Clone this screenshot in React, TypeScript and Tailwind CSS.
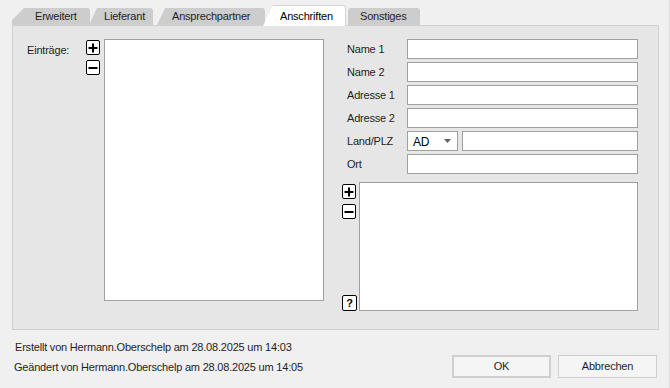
import React from 'react';

const font = { fontFamily: '"Liberation Sans", Arial, sans-serif' };

function PlusButton() {
    return (
        <button type="button" className="w-[14px] h-[15px] border border-black rounded-[2px] bg-white flex items-center justify-center p-0">
            <svg width="10" height="10" viewBox="0 0 10 10">
                <rect x="4" y="0.5" width="2" height="9" fill="#000" />
                <rect x="0.5" y="4" width="9" height="2" fill="#000" />
            </svg>
        </button>
    );
}

function MinusButton() {
    return (
        <button type="button" className="w-[14px] h-[15px] border border-black rounded-[2px] bg-white flex items-center justify-center p-0">
            <svg width="10" height="10" viewBox="0 0 10 10">
                <rect x="0.5" y="4" width="9" height="2" fill="#000" />
            </svg>
        </button>
    );
}

function HelpButton() {
    return (
        <button type="button" className="w-[15px] h-[16px] border border-black rounded-[2px] bg-white flex items-center justify-center p-0 text-[11px] font-bold leading-none text-black">
            ?
        </button>
    );
}

function Field({ label, children }: { label: string; children?: React.ReactNode }) {
    return (
        <div className="flex items-center h-[20px]">
            <span className="w-[65px] pl-[5px] shrink-0">{label}</span>
            {children ?? <input className="w-[231px] h-[20px] border border-[#a0a0a0] bg-white outline-none" />}
        </div>
    );
}

export default function App() {
    return (
        <div style={font} className="w-[670px] h-[388px] bg-[#f0f0f0] border-r border-[#d9d9d9] text-[11px] tracking-[-0.2px] text-[#1e1e1e] overflow-hidden">
            <div className="pl-[12px] pr-[10px] pt-[6px]">
                {/* Tabs */}
                <div className="flex items-end h-[19px]">
                    <div className="w-[78px] h-[17px] pl-[23px] flex items-center bg-[#cdcdcd] rounded-tr-[3px] [clip-path:polygon(12px_0,100%_0,100%_100%,0_100%,0_12px)]">
                        Erweitert
                    </div>
                    <div className="ml-[-1px] w-[64px] h-[17px] pl-[15px] flex items-center bg-[#cdcdcd] rounded-tr-[3px] [clip-path:polygon(8px_0,100%_0,100%_100%,0_100%)]">
                        Lieferant
                    </div>
                    <div className="ml-[4px] w-[108px] h-[17px] pl-[15px] flex items-center bg-[#cdcdcd] rounded-tr-[3px] [clip-path:polygon(8px_0,100%_0,100%_100%,0_100%)]">
                        Ansprechpartner
                    </div>
                    <div className="relative z-10 ml-[-2px] mb-[-1px] w-[83px] h-[21px] pl-[17px] flex items-center bg-white border-t border-r border-[#d4d4d4] rounded-tr-[3px] [clip-path:polygon(10px_0,100%_0,100%_100%,0_100%)] text-black">
                        Anschriften
                    </div>
                    <div className="ml-[2px] w-[72px] h-[17px] pl-[12px] flex items-center bg-[#cdcdcd] rounded-t-[3px]">
                        Sonstiges
                    </div>
                </div>

                {/* Panel */}
                <div className="h-[305px] border border-[#d0d0d0] bg-[#e6e6e6] flex pt-[13px]">
                    {/* Left: entries */}
                    <div className="flex pl-[14px]">
                        <span className="w-[59px] pt-[3px]">Einträge:</span>
                        <div className="flex flex-col gap-[5px] pt-[1px]">
                            <PlusButton />
                            <MinusButton />
                        </div>
                        <div className="ml-[4px] w-[220px] h-[262px] border border-[#a0a0a0] bg-white" />
                    </div>

                    {/* Right: address */}
                    <div className="ml-[18px] flex flex-col gap-[3px]">
                        <Field label="Name 1" />
                        <Field label="Name 2" />
                        <Field label="Adresse 1" />
                        <Field label="Adresse 2" />
                        <Field label="Land/PLZ">
                            <div className="flex gap-[4px]">
                                <div className="w-[51px] h-[20px] border border-[#a0a0a0] bg-white flex items-center justify-between pl-[5px] pr-[6px] text-[12px] text-black">
                                    <span className="pt-[1px]">AD</span>
                                    <svg width="7" height="4" viewBox="0 0 7 4">
                                        <polygon points="0,0 7,0 3.5,4" fill="#606060" />
                                    </svg>
                                </div>
                                <input className="w-[176px] h-[20px] border border-[#a0a0a0] bg-white outline-none" />
                            </div>
                        </Field>
                        <Field label="Ort" />

                        <div className="flex mt-[5px]">
                            <div className="flex flex-col justify-between pt-[2px] w-[17px]">
                                <div className="flex flex-col gap-[5px]">
                                    <PlusButton />
                                    <MinusButton />
                                </div>
                                <HelpButton />
                            </div>
                            <div className="w-[279px] h-[129px] border border-[#a0a0a0] bg-white" />
                        </div>
                    </div>
                </div>
            </div>

            {/* Footer */}
            <div className="flex pl-[15px] pr-[12px] pt-[10px]">
                <div className="flex flex-col gap-[5px] leading-[15px]">
                    <span>Erstellt von Hermann.Oberschelp am 28.08.2025 um 14:03</span>
                    <span className="ml-[-1px]">Geändert von Hermann.Oberschelp am 28.08.2025 um 14:05</span>
                </div>
                <div className="ml-auto flex gap-[7px] pt-[15px]">
                    <button type="button" className="w-[99px] h-[23px] border-2 border-[#cfcfcf] bg-[#f5f5f5] text-[#1e1e1e]">
                        OK
                    </button>
                    <button type="button" className="w-[99px] h-[23px] border border-[#cfcfcf] bg-[#f5f5f5] text-[#1e1e1e]">
                        Abbrechen
                    </button>
                </div>
            </div>
        </div>
    );
}
